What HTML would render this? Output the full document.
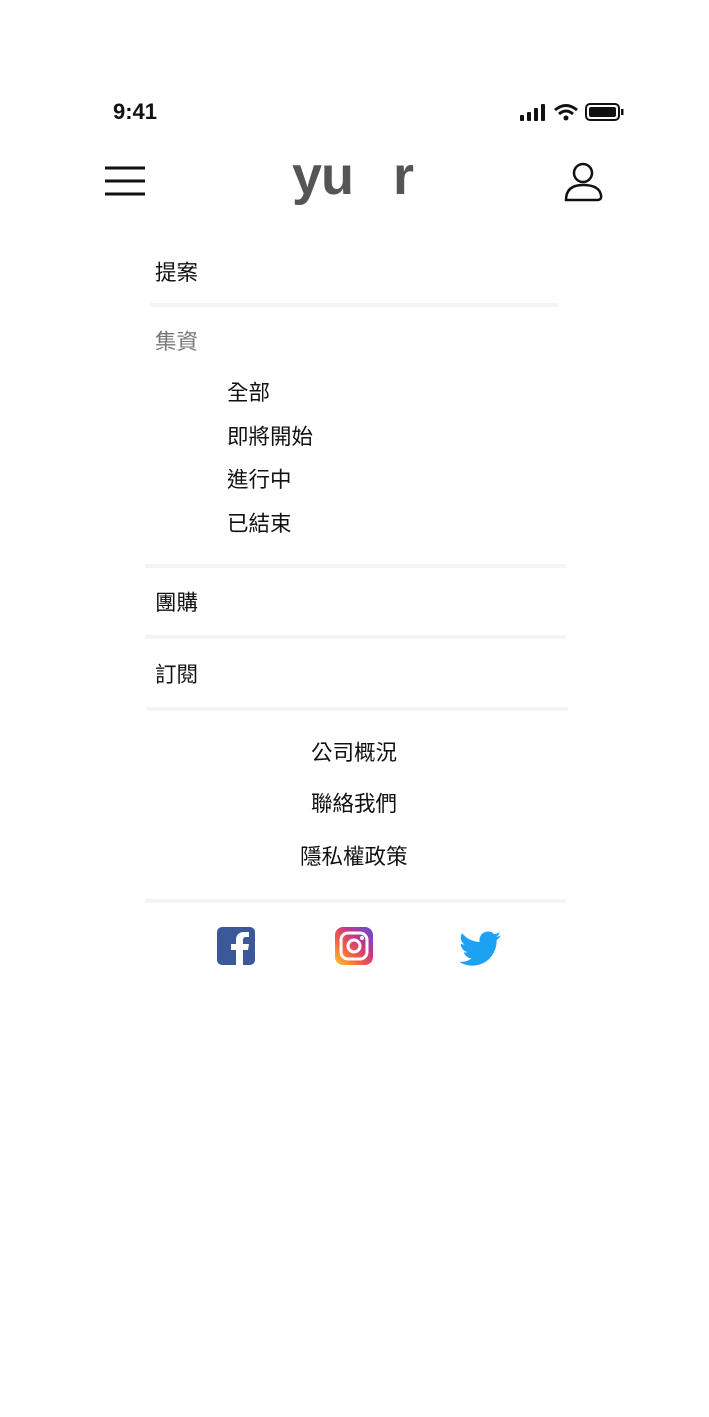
<!DOCTYPE html>
<html><head><meta charset="utf-8"><style>
body{margin:0;width:709px;height:1417px;background:#fff;position:relative;overflow:hidden;font-family:"Liberation Sans","Noto Sans CJK TC",sans-serif;}
.a{position:absolute;}
.t{position:absolute;font-size:21.5px;color:#111;line-height:24px;white-space:nowrap;}
.sep{position:absolute;height:4px;background:#f4f4f4;}
</style></head><body>
<div class="a" style="left:113px;top:99px;font-size:22px;font-weight:bold;color:#111;">9:41</div>
<svg class="a" style="left:519px;top:102px" width="106" height="22" viewBox="0 0 106 22">
<rect x="1" y="13" width="4" height="6" rx="1" fill="#111"/><rect x="8" y="10" width="4" height="9" rx="1" fill="#111"/><rect x="15" y="6" width="4" height="13" rx="1" fill="#111"/><rect x="22" y="2" width="4" height="17" rx="1" fill="#111"/>
<path d="M36 8 Q47 -1 58 8" stroke="#111" stroke-width="3" fill="none"/><path d="M40 12 Q47 6 54 12" stroke="#111" stroke-width="3" fill="none"/><circle cx="47" cy="16" r="2.5" fill="#111"/>
<rect x="67" y="2" width="33" height="16" rx="4" fill="none" stroke="#111" stroke-width="2"/><rect x="70" y="5" width="27" height="10" rx="2" fill="#111"/><rect x="102" y="7" width="2.5" height="6" fill="#111"/>
</svg>
<svg class="a" style="left:105px;top:166px" width="40" height="32"><g stroke="#111" stroke-width="3"><line x1="0" y1="2" x2="40" y2="2"/><line x1="0" y1="15" x2="40" y2="15"/><line x1="0" y1="28" x2="40" y2="28"/></g></svg>
<div class="a" style="left:285px;top:158px;width:140px;height:50px;overflow:hidden;">
<svg width="140" height="50" style="display:block"><text x="7" y="36" font-family="Liberation Sans" font-weight="bold" font-size="54" fill="#555" letter-spacing="-1">yu</text><text x="108" y="36" font-family="Liberation Sans" font-weight="bold" font-size="54" fill="#555">r</text></svg></div>
<svg class="a" style="left:563px;top:161px" width="42" height="42" viewBox="0 0 42 42"><g stroke="#111" stroke-width="2.5" fill="none"><circle cx="20" cy="12" r="9"/><path d="M3 39 Q3 24 20 24 Q36 24 38 34 Q39 39 34 39 Z"/></g></svg>
<div class="t" style="left:155px;top:261px">提案</div>
<div class="sep" style="left:150px;top:303px;width:408px"></div>
<div class="t" style="left:155px;top:330px;color:#777">集資</div>
<div class="t" style="left:227px;top:381px">全部</div>
<div class="t" style="left:227px;top:425px">即將開始</div>
<div class="t" style="left:227px;top:468px">進行中</div>
<div class="t" style="left:227px;top:512px">已結束</div>
<div class="sep" style="left:145px;top:564px;width:421px"></div>
<div class="t" style="left:155px;top:591px">團購</div>
<div class="sep" style="left:145px;top:635px;width:421px"></div>
<div class="t" style="left:155px;top:663px">訂閱</div>
<div class="sep" style="left:147px;top:707px;width:421px"></div>
<div class="t" style="left:311px;top:741px">公司概況</div>
<div class="t" style="left:311px;top:792px">聯絡我們</div>
<div class="t" style="left:300px;top:845px">隱私權政策</div>
<div class="sep" style="left:145px;top:899px;width:421px"></div>
<svg class="a" style="left:217px;top:927px" width="38" height="38" viewBox="0 0 38 38"><rect width="38" height="38" rx="5" fill="#3b5998"/><path d="M26 38V23h5l1-6h-6v-4c0-2 1-3 3-3h3V5h-5c-5 0-8 3-8 8v4h-5v6h5v15z" fill="#fff"/></svg>
<svg class="a" style="left:335px;top:927px" width="38" height="38" viewBox="0 0 38 38"><defs><linearGradient id="g" x1="0" y1="1" x2="1" y2="0"><stop offset="0" stop-color="#fdc830"/><stop offset=".35" stop-color="#f56040"/><stop offset=".65" stop-color="#c1358e"/><stop offset="1" stop-color="#5851db"/></linearGradient></defs><rect width="38" height="38" rx="8" fill="url(#g)"/><rect x="6" y="6" width="26" height="26" rx="7" fill="none" stroke="#fff" stroke-width="3"/><circle cx="19" cy="19" r="6" fill="none" stroke="#fff" stroke-width="3"/><circle cx="27" cy="11" r="2" fill="#fff"/></svg>
<svg class="a" style="left:459px;top:931px" width="42" height="36" viewBox="0 0 24 20"><path d="M24 2.3a9.8 9.8 0 0 1-2.8.8A4.9 4.9 0 0 0 23.3.4a9.9 9.9 0 0 1-3.1 1.2A4.9 4.9 0 0 0 11.8 6 14 14 0 0 1 1.7.9a4.9 4.9 0 0 0 1.5 6.6A4.9 4.9 0 0 1 1 6.9 4.9 4.9 0 0 0 4.9 11.8a4.9 4.9 0 0 1-2.2.1 4.9 4.9 0 0 0 4.6 3.4A9.9 9.9 0 0 1 0 17.3 14 14 0 0 0 7.5 19.5c9.1 0 14-7.5 14-14v-.6A10 10 0 0 0 24 2.3z" fill="#1da1f2"/></svg>
</body></html>
